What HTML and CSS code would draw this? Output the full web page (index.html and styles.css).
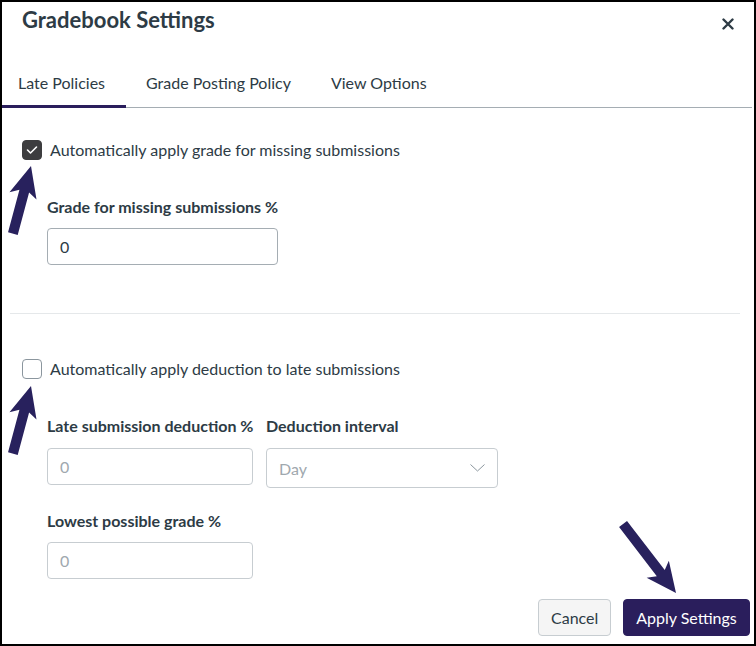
FILE: index.html
```html
<!DOCTYPE html>
<html lang="en">
<head>
    <meta charset="UTF-8">
    <meta name="viewport" content="width=device-width, initial-scale=1.0">
    <title>Gradebook Settings</title>
    <link rel="stylesheet" href="styles.css">
</head>
<body>
    <div class="modal">
        <div class="modal-header">
            <h1 class="modal-title">Gradebook Settings</h1>
            <button class="close-button" aria-label="Close">
                <svg width="12" height="12" viewBox="0 0 12 12">
                    <path d="M1.5 1.5 L10.5 10.5 M10.5 1.5 L1.5 10.5" stroke="#2d3b45" stroke-width="2.4" stroke-linecap="round"/>
                </svg>
            </button>
        </div>

        <div class="tabs">
            <div class="tab active">Late Policies</div>
            <div class="tab">Grade Posting Policy</div>
            <div class="tab">View Options</div>
        </div>

        <div class="modal-body">
            <!-- Missing submissions -->
            <label class="check-row">
                <span class="checkbox checked">
                    <svg width="12" height="10" viewBox="0 0 12 10">
                        <path d="M1.5 5 L4.5 8 L10.5 2" fill="none" stroke="#fff" stroke-width="1.6" stroke-linecap="round" stroke-linejoin="round"/>
                    </svg>
                </span>
                <span class="check-label">Automatically apply grade for missing submissions</span>
            </label>

            <div class="indent">
                <div class="field">
                    <div class="field-label">Grade for missing submissions %</div>
                    <div class="input input-wide">0</div>
                </div>
            </div>

            <hr class="divider">

            <!-- Late submissions -->
            <label class="check-row check-row-late">
                <span class="checkbox"></span>
                <span class="check-label">Automatically apply deduction to late submissions</span>
            </label>

            <div class="indent">
                <div class="field-grid">
                    <div class="field">
                        <div class="field-label">Late submission deduction %</div>
                        <div class="input input-short disabled">0</div>
                    </div>
                    <div class="field">
                        <div class="field-label">Deduction interval</div>
                        <div class="select disabled">
                            <span>Day</span>
                            <svg width="15" height="8" viewBox="0 0 15 8">
                                <path d="M0.5 0.5 L7.5 7 L14.5 0.5" fill="none" stroke="#8b969e" stroke-width="1"/>
                            </svg>
                        </div>
                    </div>
                </div>

                <div class="field field-lowest">
                    <div class="field-label">Lowest possible grade %</div>
                    <div class="input input-short disabled">0</div>
                </div>
            </div>

            <div class="modal-footer">
                <button class="btn btn-cancel">Cancel</button>
                <button class="btn btn-primary">Apply Settings</button>
            </div>
        </div>
    </div>

    <!-- annotation arrows -->
    <svg class="arrows" width="756" height="646" viewBox="0 0 756 646">
        <g fill="#28215d">
            <polygon transform="translate(31 166) rotate(15)" points="0,0 14,31 5,26 5,70 -5,70 -5,26 -14,31"/>
            <polygon transform="translate(31 386) rotate(15)" points="0,0 14,31 5,26 5,70 -5,70 -5,26 -14,31"/>
            <polygon transform="translate(676 593) rotate(142.5)" points="0,0 14,30 5,25 5,87 -5,87 -5,25 -14,30"/>
        </g>
    </svg>
</body>
</html>
```

FILE: styles.css
```css
* {
    margin: 0;
    padding: 0;
    box-sizing: border-box;
}

body {
    font-family: 'Lato', 'Open Sans', sans-serif;
    color: #2d3b45;
    background-color: #fff;
}

.modal {
    width: 756px;
    height: 646px;
    border: 2px solid #000;
    background-color: #fff;
}

.modal-header {
    display: flex;
    justify-content: space-between;
    align-items: flex-start;
    padding: 4px 20px 0 20px;
    height: 34px;
}

.modal-title {
    font-size: 22px;
    line-height: 28px;
    font-weight: 700;
}

.close-button {
    border: none;
    background: none;
    margin-top: 12px;
    display: flex;
}

.tabs {
    display: flex;
    margin-top: 23px;
    border-bottom: 1px solid #a5adb3;
    margin-right: 2px;
}

.tab {
    font-size: 16px;
    line-height: 24px;
    padding: 12px 20px 10px 20px;
    border-bottom: 3px solid transparent;
    margin-bottom: -1px;
}

.tab:first-child {
    padding-left: 16px;
    padding-right: 21px;
}

.tab.active {
    border-bottom-color: #2a1e5c;
}

.modal-body {
    padding: 30px 0 0 20px;
}

.check-row {
    display: flex;
    align-items: center;
    gap: 8px;
    height: 24px;
}

.checkbox {
    width: 20px;
    height: 20px;
    border: 1px solid #8b969e;
    border-radius: 4px;
    background-color: #fff;
    display: flex;
    align-items: center;
    justify-content: center;
}

.checkbox.checked {
    background-color: #3d3d3f;
    border-color: #3d3d3f;
}

.check-label {
    font-size: 16px;
    line-height: 24px;
}

.indent {
    padding-left: 25px;
}

.field {
    margin-top: 33px;
}

.field-label {
    font-size: 16px;
    line-height: 24px;
    font-weight: 700;
    margin-bottom: 9px;
    white-space: nowrap;
}

.field-grid .field-label {
    margin-bottom: 10px;
}

.input {
    height: 37px;
    border: 1px solid #a5adb3;
    border-radius: 4px;
    font-size: 16px;
    line-height: 35px;
    padding: 0 12px;
}

.input-wide {
    width: 231px;
}

.input-short {
    width: 206px;
}

.disabled {
    color: #a0a8ae;
    border-color: #c7cdd1;
}

.field-grid {
    display: grid;
    grid-template-columns: 206px 232px;
    column-gap: 13px;
}

.select {
    height: 40px;
    border: 1px solid #c7cdd1;
    border-radius: 4px;
    font-size: 16px;
    padding: 0 12px;
    display: flex;
    align-items: center;
    justify-content: space-between;
}

.field-lowest {
    margin-top: 21px;
}

.divider {
    border: none;
    border-top: 1px solid #e5e8ea;
    margin: 48px 14px 0 -12px;
}

.check-row-late {
    margin-top: 43px;
}

.modal-footer {
    display: flex;
    justify-content: flex-end;
    gap: 12px;
    margin-top: 20px;
    padding-right: 4px;
}

.btn {
    font-family: 'Lato', 'Open Sans', sans-serif;
    font-size: 16px;
    height: 37px;
    border-radius: 4px;
    padding: 0 12px;
}

.btn-cancel {
    width: 73px;
    background-color: #f5f5f5;
    border: 1px solid #c7cdd1;
    color: #2d3b45;
}

.btn-primary {
    width: 127px;
    background-color: #2a1e5c;
    border: 1px solid #2a1e5c;
    color: #fff;
}

.arrows {
    position: absolute;
    top: 0;
    left: 0;
    pointer-events: none;
}
```
